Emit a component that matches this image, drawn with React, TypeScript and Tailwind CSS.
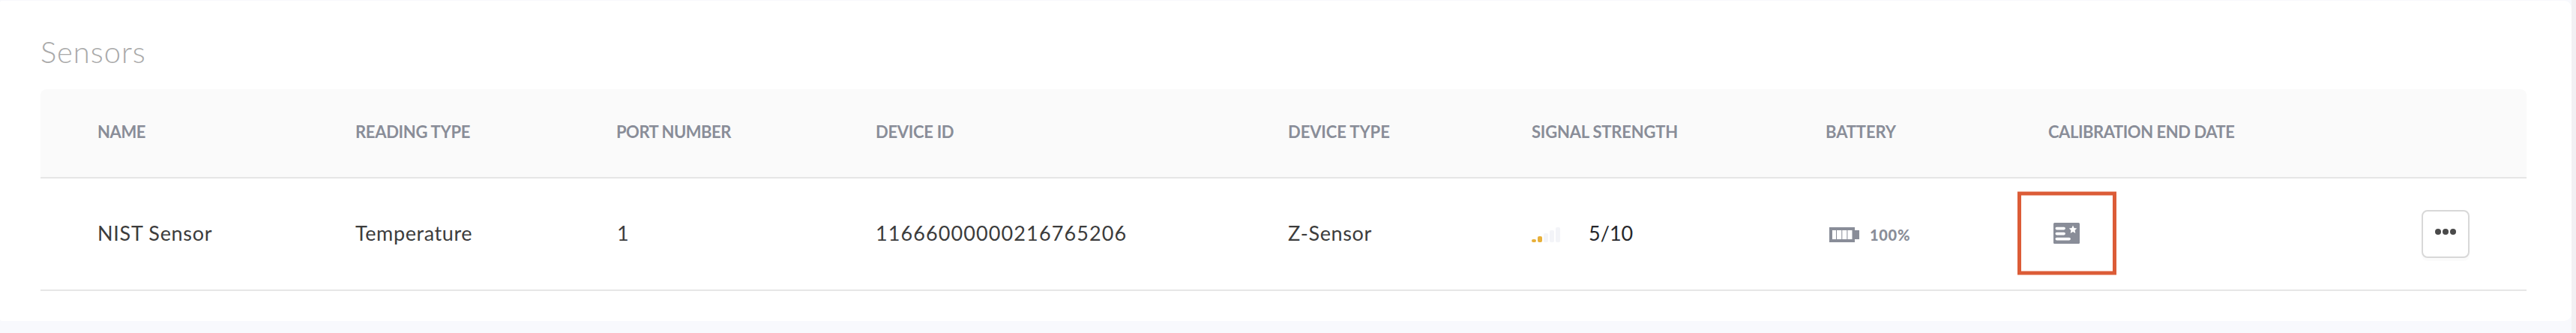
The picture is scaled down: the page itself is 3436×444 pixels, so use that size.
import clsx from "clsx";

interface Sensor {
  name: string;
  readingType: string;
  port: number;
  deviceId: string;
  deviceType: string;
  signal: number;
  battery: number;
}

const COLUMNS = [
  { label: "NAME", tracking: "tracking-[-0.4px]" },
  { label: "READING TYPE", tracking: "tracking-[-0.3px]" },
  { label: "PORT NUMBER", tracking: "tracking-[-0.5px]" },
  { label: "DEVICE ID", tracking: "tracking-[-0.3px]" },
  { label: "DEVICE TYPE", tracking: "tracking-[-0.1px]" },
  { label: "SIGNAL STRENGTH", tracking: "tracking-[-0.2px] pl-px" },
  { label: "BATTERY", tracking: "tracking-[-0.1px] pl-px" },
  { label: "CALIBRATION END DATE", tracking: "tracking-[-0.45px] pl-px" },
];

const SENSORS: Sensor[] = [
  {
    name: "NIST Sensor",
    readingType: "Temperature",
    port: 1,
    deviceId: "11666000000216765206",
    deviceType: "Z-Sensor",
    signal: 5,
    battery: 100,
  },
];

const GRID =
  "grid grid-cols-[344px_348px_346px_550px_324px_392px_297px_499px_auto] items-center pl-[76px]";

const BAR_HEIGHTS = ["h-1", "h-2", "h-3", "h-4", "h-5"];

function SignalBars({ signal }: { signal: number }) {
  const active = Math.floor(signal / 2);
  return (
    <div className="flex items-end gap-0.5">
      {BAR_HEIGHTS.map((height, index) => (
        <span
          key={height}
          className={clsx(
            "w-1.5 rounded-[2px]",
            height,
            index < active ? "bg-[#e8b03a]" : "bg-[#f3f4f8]"
          )}
        />
      ))}
    </div>
  );
}

function BatteryIcon() {
  return (
    <svg width="40" height="20" viewBox="0 0 40 20" fill="#898d98">
      <path fillRule="evenodd" d="M0 0h34v20H0zM4 4v12h26.5V4z" />
      <path d="M34 4h6v12h-6z" />
      <path d="M9 4h1v12H9zM16.3 4h1v12h-1zM23.4 4h1v12h-1z" />
    </svg>
  );
}

function CertificateIcon() {
  return (
    <svg width="35" height="28" viewBox="0 0 35 28">
      <rect width="35" height="28" rx="1.5" fill="#898d98" />
      <path
        d="M4.3 7.6h9.8M4.3 14.6h9.8M4.3 21.6h16.8"
        stroke="#fff"
        strokeWidth="3.6"
        strokeLinecap="round"
      />
      <path
        d="M26 3.6l1.6 3.4 3.7.5-2.7 2.6.7 3.8-3.3-1.8-3.3 1.8.7-3.8-2.7-2.6 3.7-.5z"
        fill="#fff"
      />
    </svg>
  );
}

function MoreButton() {
  return (
    <button className="mt-[2px] flex size-16 items-center justify-center gap-[2.5px] rounded-[8px] border-2 border-[#d8d8d8] bg-white pb-[6px] shadow-[0_4px_0_#fbfbfb]">
      <span className="size-[7.8px] rounded-full bg-[#4a4a4a]" />
      <span className="size-[7.8px] rounded-full bg-[#4a4a4a]" />
      <span className="size-[7.8px] rounded-full bg-[#4a4a4a]" />
    </button>
  );
}

function SensorRow({ sensor }: { sensor: Sensor }) {
  return (
    <div
      className={clsx(
        GRID,
        "h-[150px] border-b-2 border-[#e6e6e6] pb-[2px] text-[27px] leading-8 whitespace-nowrap text-[#3c3c3c]"
      )}
    >
      <div className="tracking-[0.7px]">{sensor.name}</div>
      <div className="tracking-[0.6px]">{sensor.readingType}</div>
      <div className="pl-px">{sensor.port}</div>
      <div className="tracking-[1.1px]">{sensor.deviceId}</div>
      <div className="tracking-[0.65px]">{sensor.deviceType}</div>
      <div className="flex items-center pl-px">
        <div className="pt-[4px]">
          <SignalBars signal={sensor.signal} />
        </div>
        <span className="pl-[38px] text-[#26272b]">{sensor.signal}/10</span>
      </div>
      <div className="flex items-center gap-[14px] pt-[4px] pl-[6px]">
        <BatteryIcon />
        <span className="text-[20px] leading-6 font-black tracking-[0.7px] text-[#898d98]">
          {sensor.battery}%
        </span>
      </div>
      <div className="relative flex items-center pb-px pl-[8px]">
        <CertificateIcon />
        <div className="absolute top-1/2 left-[-40px] h-[111px] w-[132px] -translate-y-1/2 border-[5px] border-[#dc5c37]" />
      </div>
      <MoreButton />
    </div>
  );
}

export default function App() {
  return (
    <div className="flex h-[444px] w-[3436px] bg-[#f8f9fd] font-['Lato','Open_Sans',sans-serif]">
      <div className="mt-px h-[427px] w-[3430px] rounded-[10px] rounded-l-[3px] bg-white pt-[45px] pr-[60px] pl-[54px]">
        <h2 className="h-[73px] text-[40px] leading-[46px] font-light tracking-[0.9px] text-[#a9a9a9]">
          Sensors
        </h2>
        <div
          className={clsx(
            GRID,
            "h-[119px] rounded-t-[8px] border-b-2 border-[#e6e6e6] bg-[#fafafa] pb-[3px] text-[22px] leading-7 font-bold whitespace-nowrap text-[#898d98]"
          )}
        >
          {COLUMNS.map((column) => (
            <div key={column.label} className={column.tracking}>
              {column.label}
            </div>
          ))}
        </div>
        {SENSORS.map((sensor) => (
          <SensorRow key={sensor.deviceId} sensor={sensor} />
        ))}
      </div>
      <div className="w-1.5 bg-[#f2f0f3]" />
    </div>
  );
}
